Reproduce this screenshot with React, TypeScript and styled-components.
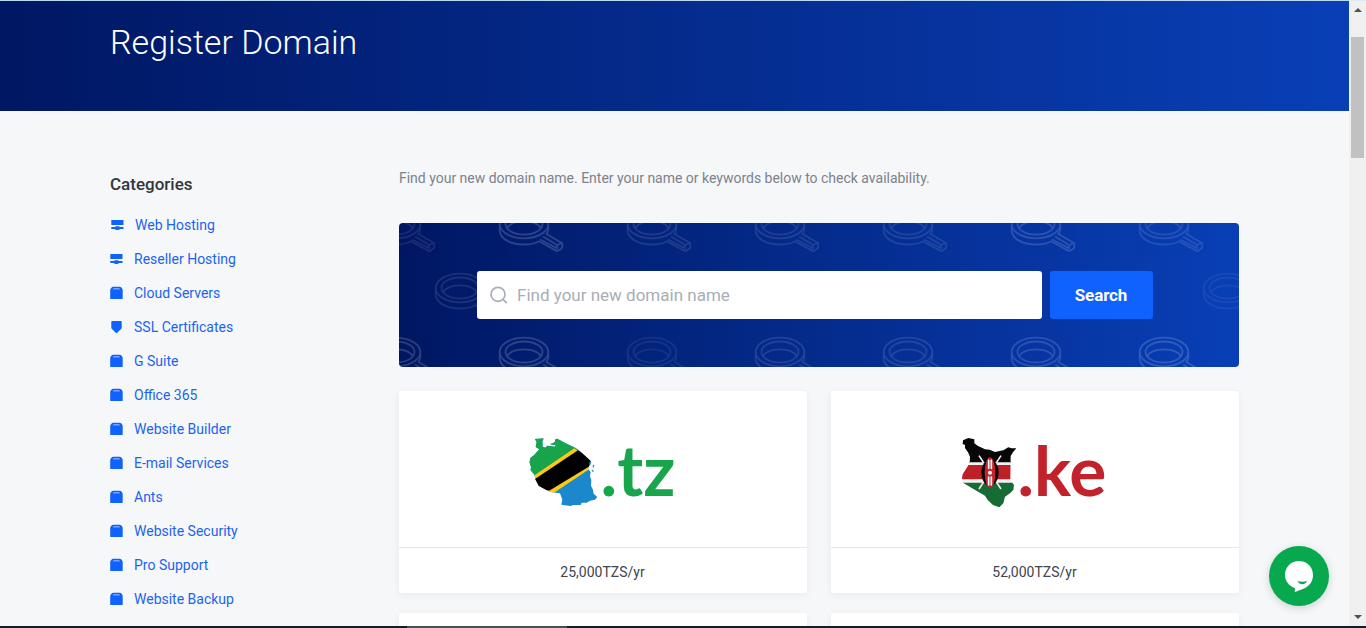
import React from 'react';
import styled, { createGlobalStyle } from 'styled-components';

const Global = createGlobalStyle`
  * { box-sizing: border-box; }
  html, body { margin: 0; padding: 0; overflow: hidden; }
  body { background: #f5f7f9; font-family: Roboto, "Liberation Sans", sans-serif; font-size: 14px; }
`;

const Window = styled.div`
  position: relative;
  display: flex;
  width: 1366px;
  height: 628px;
  overflow: hidden;
`;
const Page = styled.div`
  width: 1349px;
  height: 628px;
  overflow: hidden;
  background: #f5f7f9;
`;
const Banner = styled.header`
  height: 111px;
  padding: 19px 0 0 110px;
  border-top: 1px solid #bcd9f2;
  background: linear-gradient(90deg, #001763 0%, #093fb6 100%);
`;
const Title = styled.h1`
  margin: 0;
  color: #fff;
  font-size: 34px;
  font-weight: 300;
  line-height: 44px;
`;
const Columns = styled.div`
  display: grid;
  grid-template-columns: 265px 840px;
  column-gap: 24px;
  padding: 57px 0 0 110px;
`;
const Sidebar = styled.nav`
  padding-top: 4px;
`;
const SideTitle = styled.h2`
  margin: 0 0 12px;
  font-size: 17px;
  font-weight: 500;
  line-height: 24px;
  color: #303640;
`;
const Item = styled.a<{ $hover?: boolean }>`
  display: flex;
  align-items: center;
  gap: 11px;
  height: 34px;
  padding-left: ${p => (p.$hover ? 1 : 0)}px;
  background: ${p => (p.$hover ? '#f6f7f8' : 'transparent')};
  color: #1c64f0;
  font-size: 14px;
  line-height: 20px;
  svg { display: block; flex: none; }
`;
const Main = styled.main`
  display: flex;
  flex-direction: column;
`;
const Intro = styled.p`
  margin: 0 0 34px;
  color: #7d828c;
  line-height: 21px;
  letter-spacing: -0.01px;
`;
const SearchPanel = styled.section`
  position: relative;
  display: flex;
  align-items: center;
  gap: 8px;
  height: 144px;
  padding-left: 78px;
  border-radius: 4px;
  overflow: hidden;
  background: linear-gradient(90deg, #001763 0%, #093fb6 100%);
`;
const Pattern = styled.svg`
  position: absolute;
  inset: 0;
`;
const Field = styled.div`
  position: relative;
  display: flex;
  align-items: center;
  gap: 9px;
  width: 565px;
  height: 48px;
  padding-left: 13px;
  border-radius: 3px;
  background: #fff;
  color: #a9adb7;
  font-size: 17px;
`;
const Button = styled.button`
  position: relative;
  width: 103px;
  height: 48px;
  padding: 0 1px 0 0;
  border: 0;
  border-radius: 3px;
  background: #0f62fe;
  color: #fff;
  font: 700 17px Roboto, sans-serif;
  letter-spacing: -0.1px;
`;
const Cards = styled.div`
  display: grid;
  grid-template-columns: 408px 408px;
  gap: 20px 24px;
  margin-top: 24px;
`;
const Card = styled.article`
  height: 202px;
  border-radius: 3px;
  background: #fff;
  box-shadow: 0 2px 8px rgba(30, 40, 60, 0.06);
`;
const Logo = styled.div`
  height: 157px;
  border-bottom: 1px solid #e4e6e9;
  svg { display: block; }
`;
const Price = styled.div`
  padding: 14px 1px 0 0;
  text-align: center;
  color: #40454e;
  line-height: 21px;
`;
const Scrollbar = styled.aside`
  display: flex;
  flex-direction: column;
  align-items: center;
  justify-content: space-between;
  width: 17px;
  height: 628px;
  padding: 7px 0 9px;
  border-top: 1px solid #dcebf6;
  background: #f0f0f1;
`;
const Upper = styled.div`
  display: flex;
  flex-direction: column;
  align-items: center;
  gap: 25px;
`;
const Thumb = styled.div`
  width: 13px;
  height: 121px;
  background: #c1c1c1;
`;
const Chat = styled.div`
  position: absolute;
  left: 1269px;
  top: 546px;
  width: 60px;
  height: 60px;
  border-radius: 50%;
  background: #07a84e;
  box-shadow: 0 2px 8px rgba(0, 0, 0, 0.16);
`;
const Taskbar = styled.div`
  position: absolute;
  left: 0;
  bottom: 0;
  width: 1366px;
  height: 2px;
  padding-left: 407px;
  background: #171b26;
`;
const TaskActive = styled.div`
  width: 160px;
  height: 2px;
  background: #4b4e56;
`;

const HostIcon = () => (
  <svg width="13" height="14" viewBox="0 0 13 14" fill="#0f62fe">
    <rect x="0.3" y="2" width="12.2" height="5" rx="0.6" />
    <path d="M.3 9h3.500c.6-.5 1.100-.8 1.700-.8h1.800c.6 0 1.100.3 1.700.8h3.500v2H9c-.6.7-1.300 1-2.600 1s-2-.3-2.600-1H.3z" />
  </svg>
);
const BoxIcon = () => (
  <svg width="13" height="14" viewBox="0 0 13 14">
    <path d="M3.400.8h6.200c.9 0 1.500.3 2 1l.8 1.300c.2.300.3.700.3 1.100v8c0 .6-.3.900-.9.900H1.100c-.6 0-.9-.3-.9-.9v-8c0-.4.100-.8.300-1.100l.9-1.300c.5-.7 1.100-1 2-1z" fill="#0f62fe" />
    <path d="M2.800 3.200c.3-.5.600-.7 1.100-.7h5.100c.5 0 .8.2 1.100.7z" fill="#d5e2fb" />
  </svg>
);
const ShieldIcon = () => (
  <svg width="13" height="14" viewBox="0 0 13 14" fill="#0f62fe">
    <path d="M2.100 1h8.800c.5 0 .8.300.8.800v6c0 .4-.1.700-.4 1L7.200 12.700c-.5.400-.9.400-1.400 0L1.700 8.800c-.3-.3-.4-.6-.4-1v-6c0-.5.300-.8.800-.8z" />
  </svg>
);

const items: [string, React.FC][] = [
  ['Web Hosting', HostIcon],
  ['Reseller Hosting', HostIcon],
  ['Cloud Servers', BoxIcon],
  ['SSL Certificates', ShieldIcon],
  ['G Suite', BoxIcon],
  ['Office 365', BoxIcon],
  ['Website Builder', BoxIcon],
  ['E-mail Services', BoxIcon],
  ['Ants', BoxIcon],
  ['Website Security', BoxIcon],
  ['Pro Support', BoxIcon],
  ['Website Backup', BoxIcon],
];

const lenses: [number, number, number][] = [
  [-28, -14, 0.09], [100, -14, 0.17], [228, -14, 0.11], [356, -14, 0.1], [484, -14, 0.1], [612, -14, 0.15], [740, -14, 0.11],
  [36, 50, 0.1], [804, 50, 0.06],
  [-28, 114, 0.16], [100, 114, 0.17], [228, 114, 0.07], [356, 114, 0.11], [484, 114, 0.11], [612, 114, 0.14], [740, 114, 0.16],
];

const Lens = ({ x, y, o }: { x: number; y: number; o: number }) => (
  <g transform={`translate(${x} ${y})`} fill="none" stroke="#fff" strokeWidth="1.800" opacity={o}>
    <ellipse cx="25" cy="15" rx="24.300" ry="14.300" />
    <ellipse cx="25" cy="15" rx="18.500" ry="10.500" />
    <path d="M8 19.500C13 10 37 10 42 19.500" />
    <path d="M.7 15v7C2 31 13 35.500 25 35.500c6 0 11-1 15-3.300l16.500 9.200c1.200.7 2 .7 3 .1l2.700-1.700c.8-.5 1.100-1.100 1.100-2v-3.500L47.500 25c1.400-1.800 1.800-3.300 1.800-5V15" />
    <path d="M41 30.500L58 39.300v-3l5-2.500M44 27.500l14 8.500" />
  </g>
);

const TzLogo = () => (
  <svg width="408" height="156" viewBox="399 391 408 156">
    <defs>
      <clipPath id="tz">
        <path d="M75 42L101 40 97 50 98 65 106 68 112 62 134 65 138 60 120 58 134 52 136 43 142 41 165 54 195 68 210 78 242 108 238 122 234 132 242 141 240 154 244 166 243 182 249 194 251 206 262 216 255 224 240 227 230 233 215 233 212 240 190 240 182 243 154 239 157 224 150 205 122 201 105 193 86 182 76 163 74 150 62 136 63 125 58 112 62 98 72 91 88 73 77 66 80 52z" />
      </clipPath>
    </defs>
    <g transform="translate(510 425) scale(.3333)">
      <g clipPath="url(#tz)">
        <path d="M50 30h220v220H50z" fill="#1b87cc" />
        <path d="M50 30h220L50 178z" fill="#17a44b" />
        <path d="M50 167L193 70l67 48L130 205l-80 10z" fill="#fcc917" />
        <path d="M50 179L204 76l52 37L120 196l-70 14z" fill="#000" />
      </g>
      <path d="M240 109l4 4-3 7-4-3zM249 119l4 2-2 7-3-3zM245 134l5 2 1 6-5-3z" fill="#1b87cc" />
    </g>
    <text x="600.5" y="496" fill="#18a54b" fontFamily="Lato" fontWeight="700" fontSize="70">.tz</text>
  </svg>
);

const KeLogo = () => (
  <svg width="408" height="156" viewBox="831 391 408 156">
    <defs>
      <clipPath id="ke">
        <path d="M54 46L70 39 88 43 88 55 98 62 120 73 134 74 150 81 175 76 190 67 200 70 214 70 204 82 197 93 196 165 207 180 205 194 196 204 180 215 175 235 163 247 144 240 128 225 120 212 84 191 55 174 51 160 53 148 65 129 74 113 75 95 69 82 60 69 60 60 53 57z" />
      </clipPath>
    </defs>
    <g transform="translate(945 425) scale(.3333)">
      <g clipPath="url(#ke)">
        <path d="M40 30h190v84H40z" fill="#070707" />
        <path d="M40 112h190v62H40z" fill="#f2f2f2" />
        <path d="M40 120h190v43H40z" fill="#bd2026" />
        <path d="M40 173h190v80H40z" fill="#176b35" />
        <path d="M102 92l66 100M168 92l-66 100" stroke="#eee" strokeWidth="5" />
        <ellipse cx="135" cy="143" rx="26" ry="40" fill="#0a0506" />
        <ellipse cx="135" cy="143" rx="16" ry="46" fill="#c3252b" />
        <path d="M131 106v24M139 106v24M131 156v24M139 156v24" stroke="#fff" strokeWidth="5" strokeLinecap="round" />
        <circle cx="135" cy="143" r="6" fill="#fff" />
      </g>
    </g>
    <text x="1017.5" y="496" fill="#c2222a" fontFamily="Lato" fontWeight="700" fontSize="69.500">.ke</text>
  </svg>
);

export default function App() {
  return (
    <Window>
      <Global />
      <Page>
        <Banner><Title>Register Domain</Title></Banner>
        <Columns>
          <Sidebar>
            <SideTitle>Categories</SideTitle>
            {items.map(([label, Icon], i) => (
              <Item key={label} $hover={i === 0}><Icon />{label}</Item>
            ))}
          </Sidebar>
          <Main>
            <Intro>Find your new domain name. Enter your name or keywords below to check availability.</Intro>
            <SearchPanel>
              <Pattern width="840" height="144">
                {lenses.map(([x, y, o]) => <Lens key={`${x},${y}`} x={x} y={y} o={o} />)}
              </Pattern>
              <Field>
                <svg width="18" height="18" viewBox="0 0 18 18" fill="none" stroke="#a9adb7" strokeWidth="1.700">
                  <circle cx="8" cy="8.300" r="7" /><path d="M13 13.300l3.300 3.300" strokeLinecap="round" />
                </svg>
                Find your new domain name
              </Field>
              <Button>Search</Button>
            </SearchPanel>
            <Cards>
              <Card><Logo><TzLogo /></Logo><Price>25,000TZS/yr</Price></Card>
              <Card><Logo><KeLogo /></Logo><Price>52,000TZS/yr</Price></Card>
              <Card />
              <Card />
            </Cards>
          </Main>
        </Columns>
      </Page>
      <Scrollbar>
        <Upper>
          <svg width="8" height="4"><path d="M0 4l4-4 4 4z" fill="#505050" /></svg>
          <Thumb />
        </Upper>
        <svg width="8" height="4"><path d="M0 0l4 4 4-4z" fill="#505050" /></svg>
      </Scrollbar>
      <Chat>
        <svg width="60" height="60" viewBox="0 0 60 60">
          <path d="M30 15c8 0 14 6 14 14 0 6.500-3.500 11-9 13.500-3.500 1.500-6 2-9.300 3.800l.3-4C20 40 16 35 16 29c0-8 6-14 14-14z" fill="#fff" />
          <path d="M28.500 35c2.500 1 6.500 1 9.500 0-1 4-7.500 4.500-9.500 0z" fill="#07a84e" />
        </svg>
      </Chat>
      <Taskbar><TaskActive /></Taskbar>
    </Window>
  );
}
